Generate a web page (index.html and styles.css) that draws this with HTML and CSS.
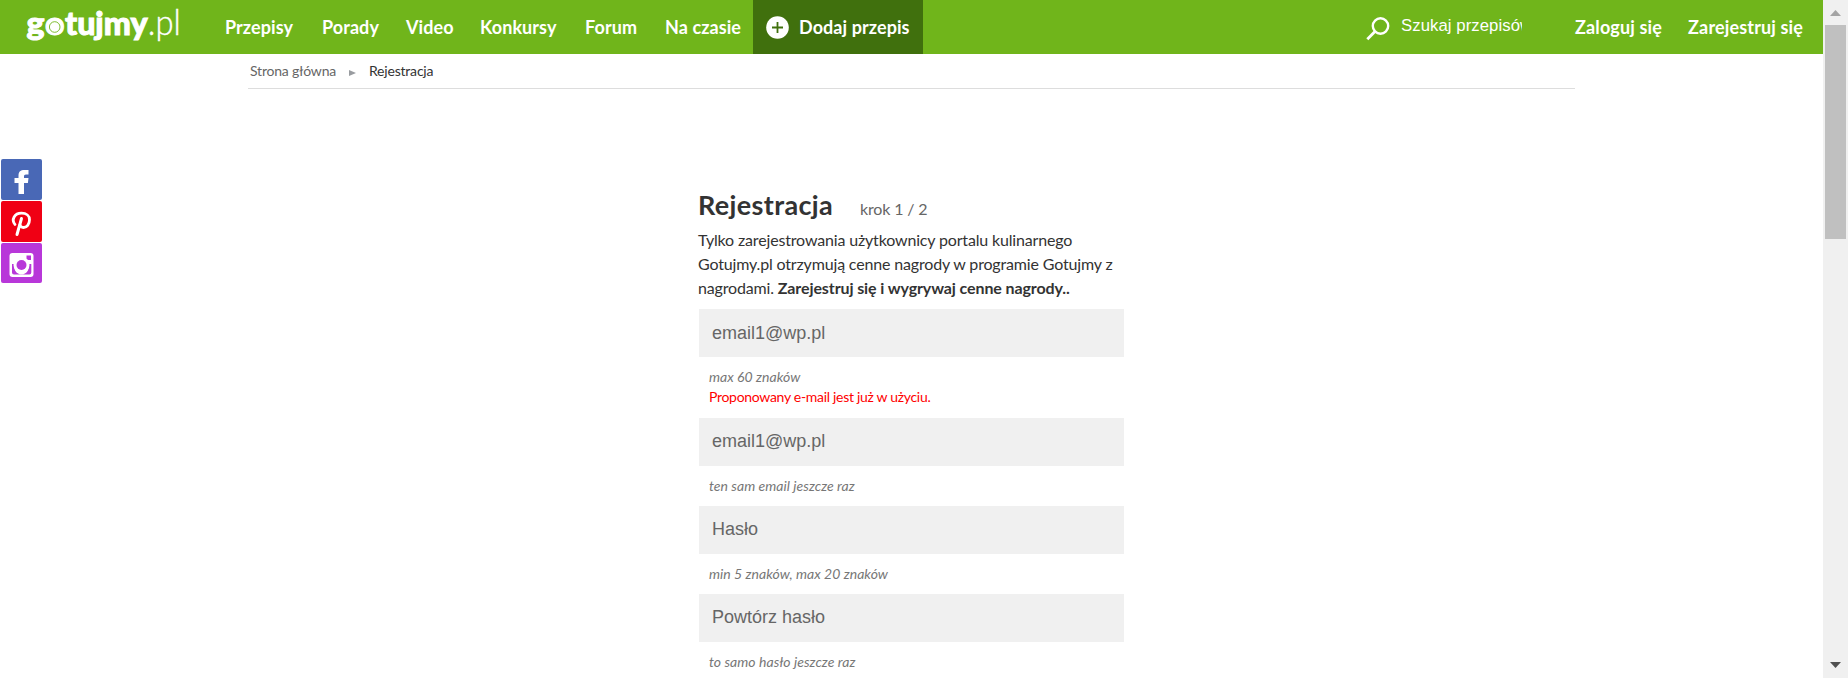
FILE: index.html
```html
<!DOCTYPE html>
<html lang="pl">
<head>
<meta charset="utf-8">
<title>Rejestracja - Gotujmy.pl</title>
<link rel="stylesheet" href="styles.css">
</head>
<body>
<div class="page">
  <header class="header">
    <a class="logo" aria-label="gotujmy.pl">
      <svg width="165" height="54" viewBox="20 0 165 54">
        <text class="logo-bold" x="26.5" y="35" textLength="18" lengthAdjust="spacingAndGlyphs">g</text>
        <text class="logo-bold" x="45" y="35" textLength="19.500" lengthAdjust="spacingAndGlyphs">o</text>
        <text class="logo-bold" x="65" y="35" textLength="82.500" lengthAdjust="spacingAndGlyphs">tujmy</text>
        <circle cx="54.7" cy="27" r="6" class="logo-disc"/>
        <circle cx="54.7" cy="27" r="5.300" class="logo-ring"/>
        <text class="logo-light" x="147.800" y="35" textLength="33" lengthAdjust="spacingAndGlyphs">.pl</text>
      </svg>
    </a>
    <nav class="nav">
      <a class="w68">Przepisy</a>
      <a class="w56">Porady</a>
      <a class="w46">Video</a>
      <a class="w77">Konkursy</a>
      <a class="w52">Forum</a>
      <a class="w75">Na czasie</a>
    </nav>
    <a class="add">
      <svg width="23" height="23" viewBox="0 0 23 23"><circle cx="11.5" cy="11.5" r="11.3" fill="#fff"/><path d="M11.5 6v11M6 11.5h11" stroke="#40700d" stroke-width="1.8"/></svg>
      <span>Dodaj przepis</span>
    </a>
    <div class="search">
      <svg width="24" height="24" viewBox="0 0 24 24" fill="none" stroke="#fff"><circle cx="14.5" cy="9" r="7.7" stroke-width="2.4"/><path d="M9 14.5 1.3 22.2" stroke-width="2.8"/></svg>
      <span class="search-text">Szukaj przepisów</span>
    </div>
    <div class="account"><a>Zaloguj się</a><a>Zarejestruj się</a></div>
  </header>
  <div class="crumbs"><a>Strona główna</a><svg width="7" height="6" viewBox="0 0 7 6"><path d="M0 0 7 3 0 6z" fill="#999ca0"/></svg><span>Rejestracja</span></div>
  <main class="form">
    <div class="heading"><h1>Rejestracja</h1><span class="step">krok 1 / 2</span></div>
    <p class="intro">Tylko zarejestrowania użytkownicy portalu kulinarnego<br>Gotujmy.pl otrzymują cenne nagrody w programie Gotujmy z<br>nagrodami. <b>Zarejestruj się i wygrywaj cenne nagrody..</b></p>
    <div class="field first">email1@wp.pl</div>
    <div class="notes tall"><div class="hint">max 60 znaków</div><div class="error">Proponowany e-mail jest już w użyciu.</div></div>
    <div class="field">email1@wp.pl</div>
    <div class="notes"><div class="hint">ten sam email jeszcze raz</div></div>
    <div class="field">Hasło</div>
    <div class="notes"><div class="hint">min 5 znaków, max 20 znaków</div></div>
    <div class="field">Powtórz hasło</div>
    <div class="notes"><div class="hint">to samo hasło jeszcze raz</div></div>
  </main>
</div>
<aside class="social">
  <a class="fb"><svg width="41" height="41" viewBox="0 0 41 41"><path d="M17.500 35V24h-4v-5h4v-2.500c0-4 2-5.500 6-5.500h4v4.500h-2.500c-1.500 0-2 .8-2 2v1.500h4.500l-.6 5h-3.900v11z" fill="#fff"/></svg></a>
  <a class="pin"><svg width="41" height="41" viewBox="0 0 41 41" fill="none" stroke="#fff" stroke-linecap="round"><path d="M14 23.500c-4-5-.5-11.300 6.500-11.300 5 0 8 2.800 8 6.500 0 4.500-2.700 7.800-6 7.800-2.300 0-3.300-1.200-3.500-2.600" stroke-width="2.800"/><path d="M20.500 17.500 16 33.500" stroke-width="3"/></svg></a>
  <a class="insta"><svg width="41" height="40" viewBox="0 0 41 40"><rect x="8.500" y="10" width="24" height="24" rx="3" fill="#fff"/><rect x="25.500" y="12.500" width="4.500" height="4.500" fill="#b837d9"/><path d="M11 21h3a7.200 7.200 0 1 0 13 0h3.300v8.500q0 2-2 2h-15.300q-2 0-2-2z" fill="#b837d9"/><circle cx="20.500" cy="22" r="8" fill="#fff"/><circle cx="20.500" cy="22" r="5" fill="#b837d9"/></svg></a>
</aside>
<div class="scrollbar"><svg width="25" height="25" viewBox="0 0 25 25"><path d="M7 16 12.500 10 18 16z" fill="#a3a3a3"/></svg><div class="thumb"></div><svg class="down" width="25" height="25" viewBox="0 0 25 25"><path d="M7 9h11l-5.500 6z" fill="#505050"/></svg></div>
</body>
</html>
```
FILE: styles.css
```css
* { box-sizing: border-box; }
body { margin: 0; width: 1848px; height: 678px; overflow: hidden; display: flex; background: #fff; color: #333; font-family: Lato, sans-serif; }
.page { width: 1823px; height: 678px; overflow: hidden; }
.header { height: 54px; display: flex; background: #70b51b; color: #fff; font-size: 18px; font-weight: 700; letter-spacing: .08px; line-height: 54px; white-space: nowrap; }
.logo { width: 225px; height: 54px; padding-left: 20px; }
.logo svg { display: block; letter-spacing: 0; }
.logo-bold { font: 900 33px Lato, sans-serif; fill: #fff; stroke: #fff; stroke-width: 1px; }
.logo-light { font: 300 35px Lato, sans-serif; fill: #fff; stroke: #fff; stroke-width: .4px; }
.logo-disc { fill: #fff; }
.logo-ring { fill: none; stroke: #70b51b; stroke-width: .9px; }
.nav { display: flex; gap: 28px; width: 528px; }
.w68 { width: 69px; }
.w56 { width: 56px; }
.w46 { width: 46px; }
.w77 { width: 77px; }
.w52 { width: 52px; }
.w75 { width: 75px; }
.add { width: 170px; height: 54px; padding-left: 13px; display: flex; align-items: center; gap: 10px; background: #40700d; }
.search { width: 652px; padding-left: 443px; display: flex; align-items: center; gap: 11px; }
.search svg { margin-top: 3px; }
.search-text { width: 121px; overflow: hidden; font: 400 16.7px/52px "Liberation Sans", sans-serif; height: 54px; }
.account { display: flex; gap: 26px; letter-spacing: .15px; }
.crumbs { margin-left: 248px; width: 1327px; height: 35px; border-bottom: 1px solid #ddd; padding: 0 0 2px 2px; display: flex; align-items: center; font-size: 14px; letter-spacing: -.2px; }
.crumbs a { color: #666; width: 98px; }
.crumbs svg { margin: 5px 13px 0 1px; }
.form { width: 425px; margin: 98px 0 0 699px; }
.heading { height: 36px; display: flex; align-items: baseline; line-height: 36px; margin-left: -1px; }
h1 { margin: 0; width: 162px; font-size: 27px; font-weight: 700; letter-spacing: .35px; }
.step { font-size: 16px; letter-spacing: -.15px; color: #666; }
.intro { margin: 5px 0 9px -1px; font-size: 16px; letter-spacing: -.16px; line-height: 24px; white-space: nowrap; }
.intro b { letter-spacing: -.1px; }
.field { height: 48px; padding-left: 13px; background: #f0f0f0; color: #666; font: 18px/47px "Liberation Sans", sans-serif; }
.first { line-height: 49px; }
.notes { height: 40px; padding: 10px 0 0 10px; font-size: 14px; line-height: 20px; }
.tall { height: 61px; }
.hint { color: #777; font-style: italic; letter-spacing: .04px; }
.error { color: #f00; letter-spacing: -.3px; }
.social { position: absolute; left: 1px; top: 159px; display: grid; gap: 1px; }
.social a { border-radius: 2px; overflow: hidden; }
.social svg { display: block; }
.fb { background: #4968b6; }
.pin { background: #f00014; }
.insta { background: #b837d9; }
.scrollbar { width: 25px; height: 678px; background: #f0f0f0; display: flex; flex-direction: column; }
.thumb { width: 21px; height: 214px; margin-left: 2px; background: #c0c0c0; }
.down { margin-top: auto; }
```
